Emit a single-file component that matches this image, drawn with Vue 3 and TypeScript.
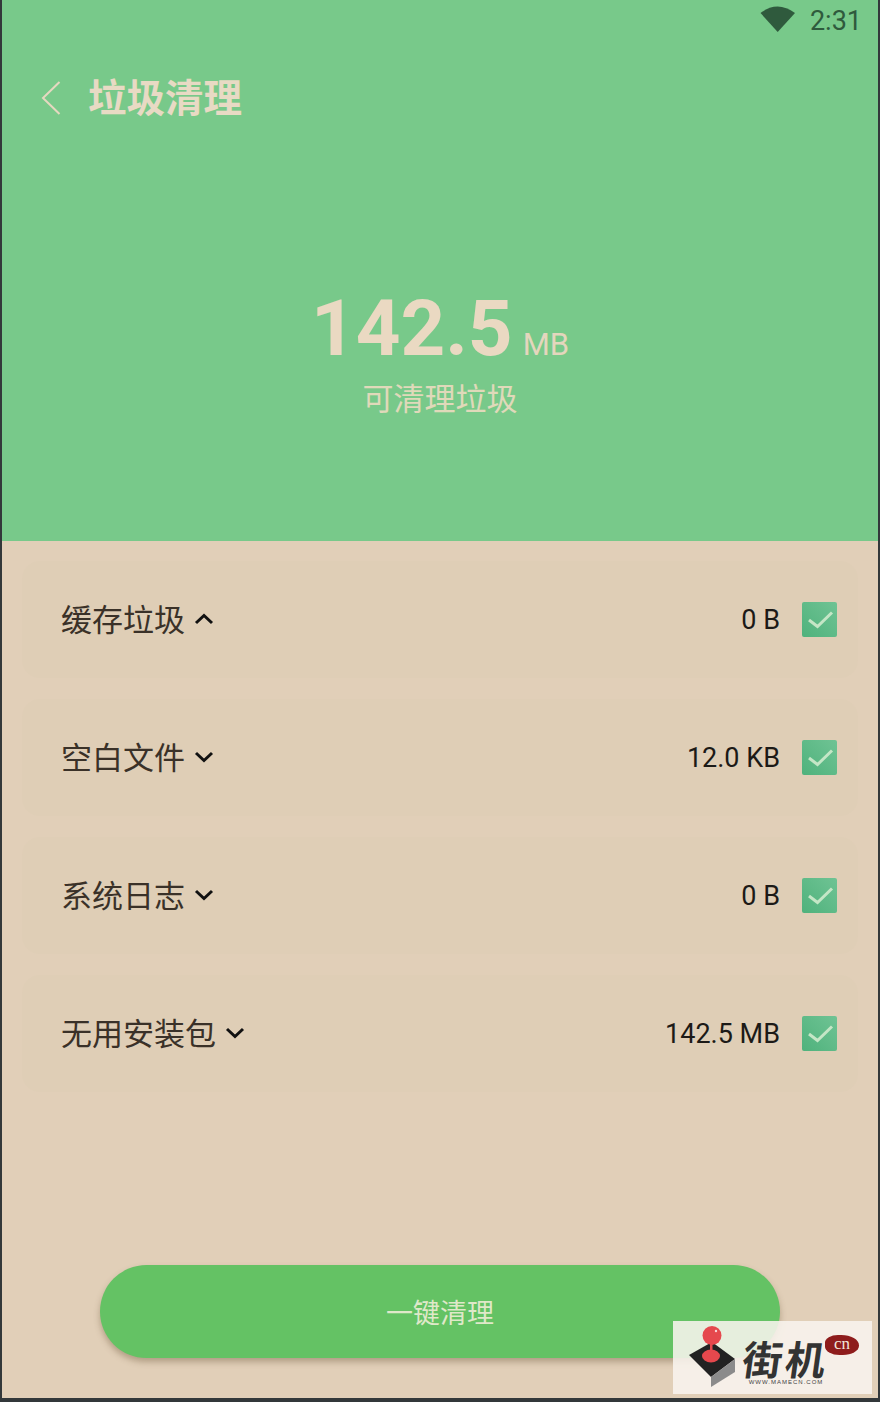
<template>
  <div class="frame">
    <div class="screen">
      <header class="head">
        <div class="status">
          <svg class="wifi" width="36" height="28" viewBox="0 0 36 28">
            <path d="M0.5 8 Q17.5 -5 35 8 L17.7 27 Z" fill="#2f5a3d" />
          </svg>
          <span class="time">2:31</span>
        </div>
        <div class="title-bar">
          <svg class="back" width="20" height="36" viewBox="0 0 20 36">
            <path d="M18.5 2 L2 18 L18.5 34" fill="none" stroke="#e6d8c0" stroke-width="2" />
          </svg>
          <h1 class="title">垃圾清理</h1>
        </div>
        <div class="summary">
          <div class="size"><span class="num">142.5</span><span class="unit">MB</span></div>
          <div class="sub">可清理垃圾</div>
        </div>
      </header>

      <main class="body">
        <ul class="list">
          <li v-for="item in items" :key="item.name" class="card">
            <span class="name">{{ item.name }}</span>
            <svg class="arrow" width="20" height="14" viewBox="0 0 20 14">
              <path
                :d="item.open ? 'M2 11 L10 3.5 L18 11' : 'M2 3 L10 10.5 L18 3'"
                fill="none"
                stroke="#111"
                stroke-width="3"
              />
            </svg>
            <span class="amount">{{ item.size }}</span>
            <span class="check">
              <svg width="35" height="35" viewBox="0 0 35 35">
                <path d="M7 18 L15.5 24.5 L30 10.5" fill="none" stroke="#c4e6c6" stroke-width="3" />
              </svg>
            </span>
          </li>
        </ul>
        <button class="clean">一键清理</button>
      </main>

      <div class="mark">
        <svg class="stick" width="56" height="66" viewBox="0 0 56 66">
          <path d="M26 16 L49 33 L25 51 L3 29 Z" fill="#222" />
          <path d="M49 33 L49 46 L25 61 L25 51 Z" fill="#8b8b8b" />
          <ellipse cx="25" cy="30" rx="9" ry="6.5" fill="#e5484d" />
          <rect x="24" y="16" width="2.5" height="14" fill="#e5484d" />
          <circle cx="26" cy="9.5" r="9.5" fill="#e5484d" />
          <circle cx="30" cy="5" r="1.2" fill="#f7d6d6" />
        </svg>
        <div class="brand">
          <span class="brand-name">街机</span>
          <span class="brand-url">WWW.MAMECN.COM</span>
        </div>
        <span class="cn">cn</span>
      </div>
    </div>
  </div>
</template>

<script setup lang="ts">
interface CleanItem {
  name: string
  size: string
  open: boolean
}

const items: CleanItem[] = [
  { name: '缓存垃圾', size: '0 B', open: true },
  { name: '空白文件', size: '12.0 KB', open: false },
  { name: '系统日志', size: '0 B', open: false },
  { name: '无用安装包', size: '142.5 MB', open: false },
]
</script>

<style>
html,
body {
  margin: 0;
  background: #33383a;
}
</style>

<style scoped>
.frame {
  width: 880px;
  height: 1402px;
  padding: 0 2px 4px;
  box-sizing: border-box;
  background: #33383a;
  font-family: Roboto, 'Noto Sans CJK SC', sans-serif;
}

.screen {
  position: relative;
  height: 100%;
  display: flex;
  flex-direction: column;
  overflow: hidden;
}

.head {
  height: 541px;
  flex: none;
  background: #78c98a;
  color: #e6d8c0;
}

.status {
  height: 41px;
  display: flex;
  align-items: center;
  justify-content: flex-end;
  padding-right: 16px;
  gap: 14px;
}

.wifi {
  margin-top: -4px;
}

.time {
  margin-top: 1px;
  font-size: 27px;
  color: #2f5a3d;
}

.title-bar {
  display: flex;
  align-items: center;
  gap: 27px;
  margin-top: 36px;
  padding-left: 39px;
  height: 42px;
}

.title {
  margin: 2px 0 0;
  font-size: 38.5px;
  font-weight: 700;
  line-height: 42px;
  color: #e8dac4;
}

.summary {
  margin-top: 165px;
  text-align: center;
}

.size {
  display: flex;
  justify-content: center;
  align-items: baseline;
  gap: 10px;
  line-height: 90px;
  height: 90px;
}

.num {
  font-size: 78px;
  font-weight: 700;
  color: #ead9c2;
}

.unit {
  font-size: 31px;
  color: #e4d6bd;
}

.sub {
  margin-top: 6px;
  font-size: 31px;
  line-height: 40px;
  color: #e0d9ba;
}

.body {
  position: relative;
  flex: 1;
  background: #e1cfb8;
}

.list {
  list-style: none;
  margin: 0;
  padding: 20px 20px 0;
  display: flex;
  flex-direction: column;
  gap: 21px;
}

.card {
  height: 117px;
  box-sizing: border-box;
  display: flex;
  align-items: center;
  padding: 0 21px 0 39px;
  border-radius: 18px;
  background: #dfceb6;
}

.name {
  margin-top: -4px;
  font-size: 31px;
  color: #3a3128;
}

.arrow {
  margin-left: 9px;
  margin-top: -2px;
}

.amount {
  margin-left: auto;
  font-size: 27px;
  color: #1c1a17;
}

.check {
  width: 35px;
  height: 35px;
  margin-left: 22px;
  display: flex;
  border-radius: 2px;
  background: linear-gradient(45deg, #4fb27c, #6fc394);
}

.clean {
  position: absolute;
  left: 98px;
  right: 98px;
  bottom: 40px;
  height: 93px;
  border: none;
  border-radius: 47px;
  background: #64c264;
  box-shadow: 0 4px 6px rgba(120, 100, 70, 0.45);
  color: #dfe8c9;
  font-family: inherit;
  font-size: 27px;
}

.mark {
  position: absolute;
  left: 671px;
  top: 1321px;
  width: 199px;
  height: 73px;
  background: rgba(248, 244, 238, 0.88);
}

.stick {
  position: absolute;
  left: 13px;
  top: 5px;
}

.brand {
  position: absolute;
  left: 70px;
  top: 17px;
  width: 86px;
  display: flex;
  flex-direction: column;
  align-items: center;
}

.brand-name {
  font-size: 40px;
  line-height: 40px;
  font-weight: 700;
  letter-spacing: 3px;
  color: #333;
  font-family: 'Noto Sans CJK SC', sans-serif;
  transform: skewX(-8deg);
}

.brand-url {
  font-family: 'Liberation Sans', sans-serif;
  font-size: 6px;
  line-height: 8px;
  letter-spacing: 1px;
  color: #444;
  white-space: nowrap;
}

.cn {
  position: absolute;
  left: 152px;
  top: 14px;
  width: 34px;
  height: 20px;
  border-radius: 40% 55% 50% 45%;
  background: #8e1c1c;
  color: #f1e6da;
  font-family: 'Liberation Serif', serif;
  font-size: 17px;
  line-height: 17px;
  text-align: center;
}
</style>
